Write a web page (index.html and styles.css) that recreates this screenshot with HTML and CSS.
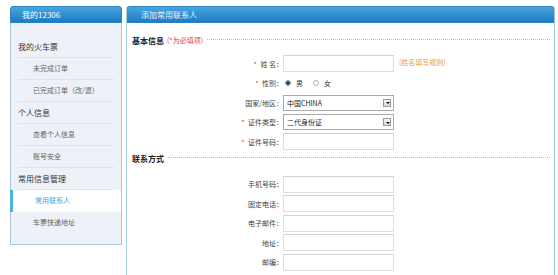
FILE: index.html
```html
<!DOCTYPE html>
<html lang="zh">
<head>
<meta charset="utf-8">
<title>添加常用联系人</title>
<link rel="stylesheet" href="styles.css">
</head>
<body>
<div class="page">
  <aside class="side">
    <div class="side-head">我的12306</div>
    <div class="side-body">
      <div class="item head">我的火车票</div>
      <div class="item sub">未完成订单</div>
      <div class="item sub">已完成订单（改/退）</div>
      <div class="item head">个人信息</div>
      <div class="item sub">查看个人信息</div>
      <div class="item sub">账号安全</div>
      <div class="item head">常用信息管理</div>
      <div class="item sub active">常用联系人</div>
      <div class="item sub last">车票快递地址</div>
    </div>
  </aside>
  <main class="panel">
    <div class="panel-head">添加常用联系人</div>
    <div class="panel-body">
      <div class="sec-title"><b>基本信息</b><span class="req-note">(*为必填项)</span><span class="dots"></span></div>
      <div class="rows">
        <div class="row"><label class="lab"><i>*</i> 姓 名：</label><span class="inp"></span><span class="hint">(姓名填写规则)</span></div>
        <div class="row"><label class="lab"><i>*</i> 性别：</label>
          <span class="radios"><span class="radio on"></span><span class="rtxt">男</span><span class="radio"></span><span class="rtxt">女</span></span></div>
        <div class="row"><label class="lab">国家/地区：</label><span class="sel"><span class="val">中国CHINA</span><span class="btn"></span></span></div>
        <div class="row"><label class="lab"><i>*</i> 证件类型：</label><span class="sel"><span class="val">二代身份证</span><span class="btn"></span></span></div>
        <div class="row"><label class="lab"><i>*</i> 证件号码：</label><span class="inp"></span></div>
      </div>
      <div class="sec-title sec2"><b>联系方式</b><span class="dots"></span></div>
      <div class="rows">
        <div class="row"><label class="lab">手机号码：</label><span class="inp"></span></div>
        <div class="row"><label class="lab">固定电话：</label><span class="inp"></span></div>
        <div class="row"><label class="lab">电子邮件：</label><span class="inp"></span></div>
        <div class="row"><label class="lab">地址：</label><span class="inp"></span></div>
        <div class="row"><label class="lab">邮编：</label><span class="inp"></span></div>
      </div>
    </div>
  </main>
</div>
</body>
</html>
```
FILE: styles.css
```css
* { box-sizing: border-box; }
html, body { margin: 0; padding: 0; background: #fff; overflow: hidden; }
body {
  font-family: "Noto Sans CJK SC", "DejaVu Sans", sans-serif;
  color: #333;
  width: 558px;
  height: 275px;
}
.page {
  display: flex;
  align-items: flex-start;
  gap: 4px;
  padding: 6px 0 0 10px;
}

/* sidebar */
.side { width: 112px; }
.side-head {
  height: 17px;
  border-radius: 3px 3px 0 0;
  background: linear-gradient(#4ba4de, #1c7bc3);
  border: 1px solid #2a82c4;
  color: #fff;
  font-size: 8px;
  line-height: 15px;
  padding-left: 11px;
}
.side-body {
  background: #eef2f8;
  border: 1px solid #a9c6dd;
  border-top: none;
  padding: 13px 0 10px;
}
.item {
  height: 22px;
  line-height: 21px;
  margin: 0 7px;
  border-bottom: 1px solid #dde4ee;
  white-space: nowrap;
}
.item.head { font-size: 8px; color: #333; padding-left: 0; }
.item.sub { font-size: 7px; color: #666; padding-left: 15px; }
.item.last { border-bottom: none; }
.item.active {
  margin: 0 0 0 -1px;
  padding-left: 22px;
  background: #fff;
  color: #45a3de;
  border-left: 3px solid #4cb4da;
  border-bottom: none;
}

/* main panel */
.panel {
  width: 429px;
  height: 269px;
  overflow: hidden;
  border: 1px solid #a6cde0;
  border-right-color: #9ccad2;
  border-top: none;
  border-bottom: none;
  border-radius: 3px 3px 0 0;
}
.panel-head {
  height: 17px;
  margin: 0 -1px;
  border-radius: 3px 3px 0 0;
  background: linear-gradient(#4ba4de, #1c7bc3);
  border: 1px solid #2a82c4;
  color: #e6f2fb;
  font-size: 8px;
  line-height: 15px;
  padding-left: 14px;
}
.panel-body { padding: 10px 4px 0 5px; }
.sec-title {
  display: flex;
  align-items: center;
  height: 14px;
  white-space: nowrap;
}
.sec-title b { font-size: 8px; font-weight: bold; color: #222; }
.req-note { font-size: 7px; color: #e3393c; margin-left: 3px; }
.dots {
  flex: 1;
  border-top: 1px dotted #b8b8b8;
  margin-left: 4px;
  margin-top: -2px;
}
.rows { padding-top: 7px; }
.sec2 + .rows { padding-top: 9px; }
.row {
  display: flex;
  align-items: center;
  height: 19.5px;
}
.lab {
  width: 151px;
  text-align: right;
  font-size: 7px;
  color: #444;
  white-space: nowrap;
}
.lab i { font-style: normal; color: #e3393c; margin-right: 2px; }
.inp {
  width: 111px;
  height: 17px;
  border: 1px solid #dedede;
  border-top-color: #d2d2d2;
  background: #fff;
}
.hint { font-size: 7px; color: #e8993a; margin-left: 5px; margin-top: -4px; white-space: nowrap; }
.radios { display: flex; align-items: center; padding-left: 2px; }
.radio {
  width: 6px;
  height: 6px;
  border-radius: 50%;
  border: 1px solid #b5b5b5;
  background: #fff;
}
.radio.on { border-color: #8a9aa8; background: radial-gradient(circle, #28425a 0 1.6px, #fff 2px); }
.rtxt { font-size: 7px; color: #333; margin: 0 10px 0 5px; }
.sel {
  display: flex;
  align-items: center;
  width: 111px;
  height: 16px;
  border: 1px solid #a9a9a9;
  background: #fff;
  padding: 0 2px 0 3px;
}
.val { font-size: 7px; color: #222; flex: 1; }
.btn {
  width: 8px;
  height: 8px;
  border: 1px solid #9a9a9a;
  background: linear-gradient(#f6f6f6, #d8d8d8);
  position: relative;
}
.btn::after {
  content: "";
  position: absolute;
  left: 1.5px;
  top: 2.5px;
  border-left: 2px solid transparent;
  border-right: 2px solid transparent;
  border-top: 2px solid #111;
}
```
